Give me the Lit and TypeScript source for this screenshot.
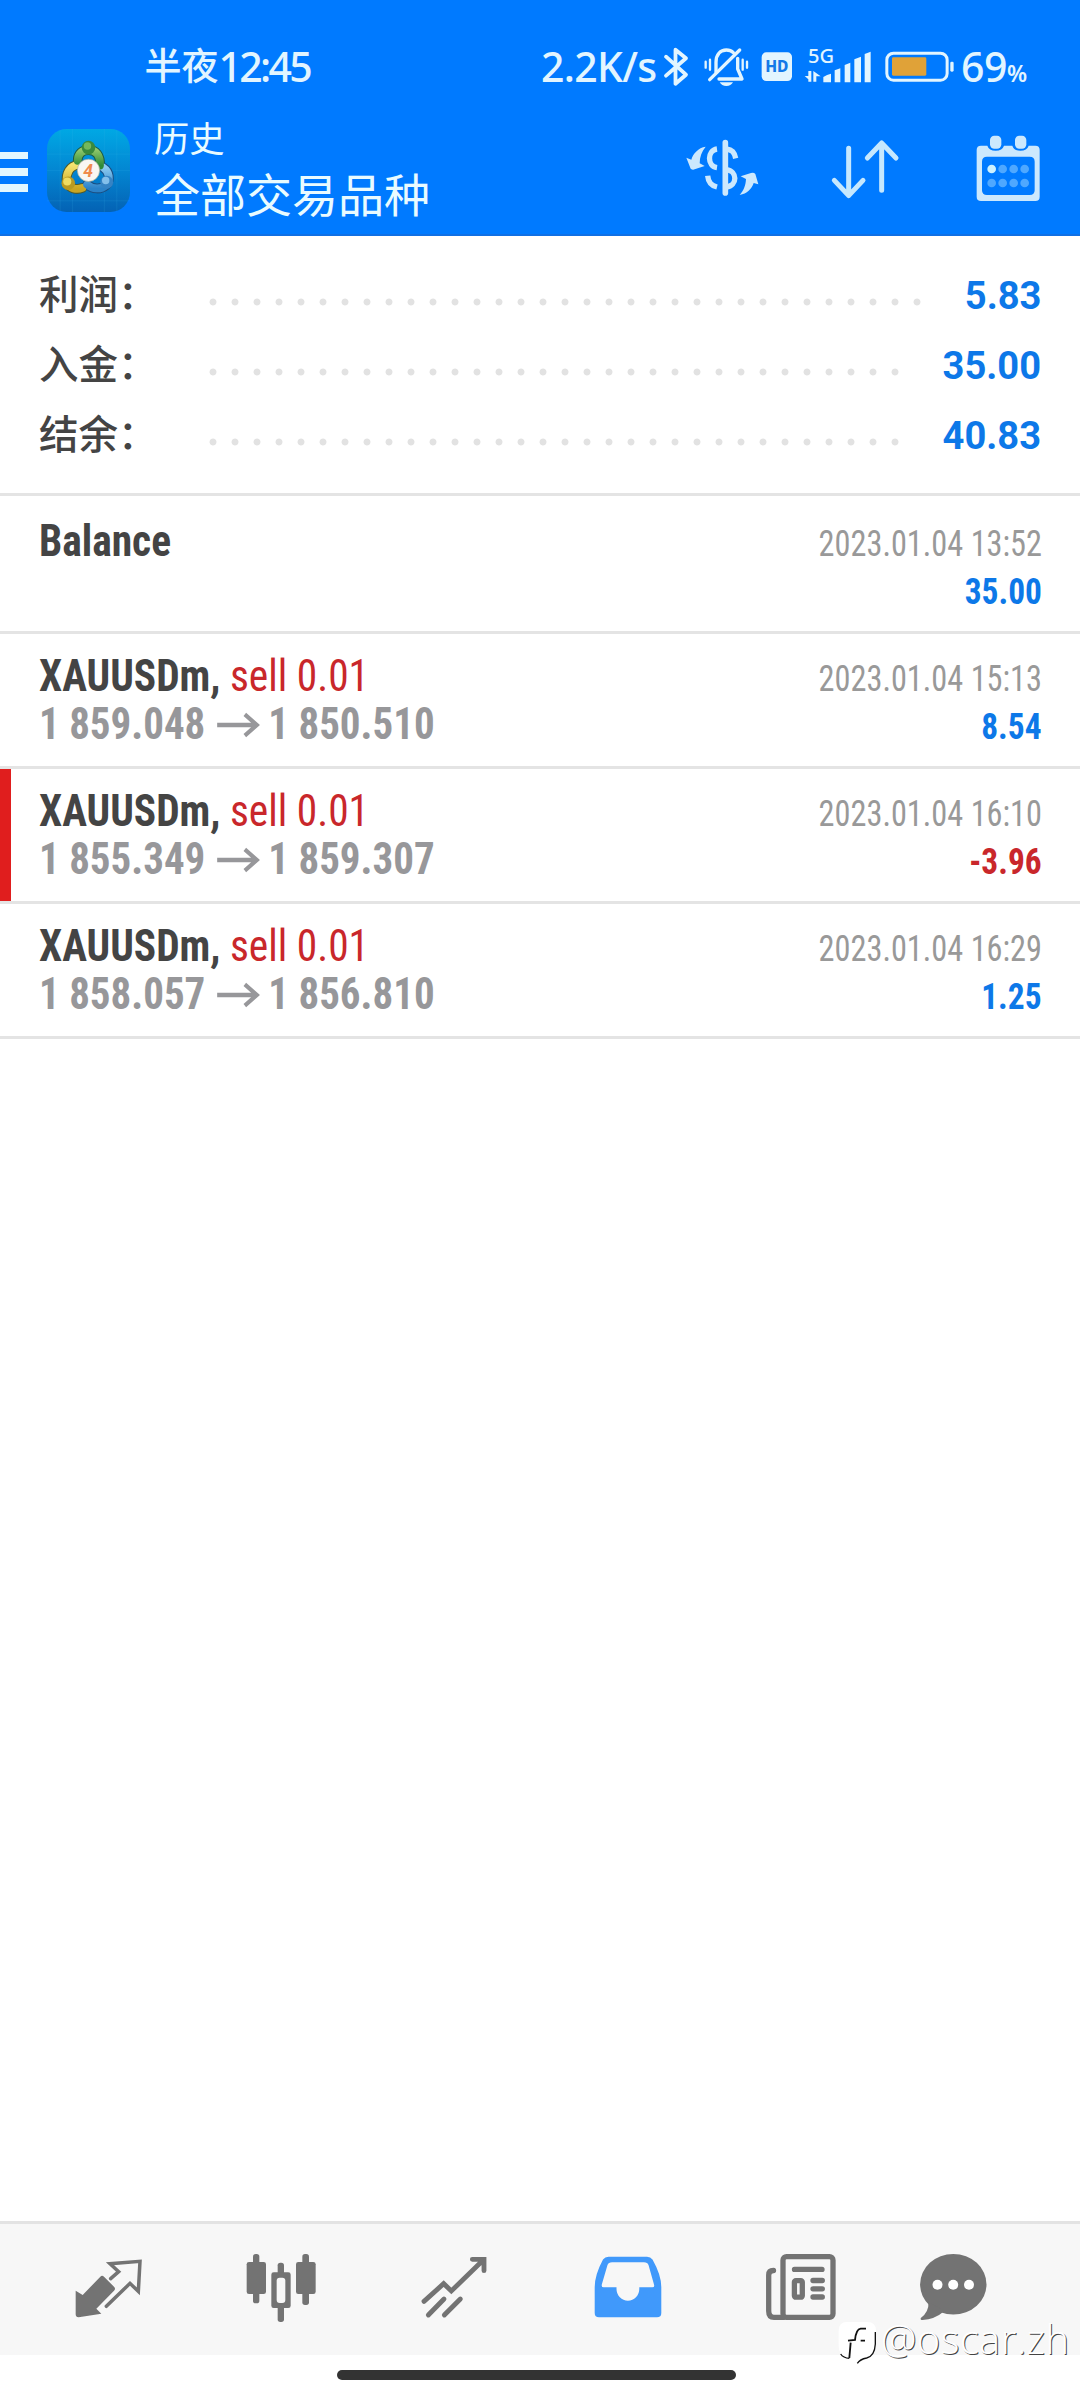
import { LitElement, html, css, svg, nothing } from "lit";
import { customElement, property } from "lit/decorators.js";

interface Total {
  label: string;
  value: string;
  dots: number;
}

interface Deal {
  symbol: string;
  side?: string;
  open?: string;
  close?: string;
  time: string;
  profit: string;
  marked?: boolean;
}

const TOTALS: Total[] = [
  { label: "利润：", value: "5.83", dots: 33 },
  { label: "入金：", value: "35.00", dots: 32 },
  { label: "结余：", value: "40.83", dots: 32 },
];

const DEALS: Deal[] = [
  { symbol: "Balance", time: "2023.01.04 13:52", profit: "35.00" },
  { symbol: "XAUUSDm,", side: "sell 0.01", open: "1 859.048", close: "1 850.510", time: "2023.01.04 15:13", profit: "8.54" },
  { symbol: "XAUUSDm,", side: "sell 0.01", open: "1 855.349", close: "1 859.307", time: "2023.01.04 16:10", profit: "-3.96", marked: true },
  { symbol: "XAUUSDm,", side: "sell 0.01", open: "1 858.057", close: "1 856.810", time: "2023.01.04 16:29", profit: "1.25" },
];

@customElement("status-bar")
class StatusBar extends LitElement {
  static styles = css`
    :host {
      display: flex;
      align-items: center;
      height: 67px;
      padding: 33px 0 0 144.5px;
      color: #e2f5ff;
      font: 550 41px/67px "Noto Sans", "Noto Sans CJK SC", sans-serif;
      white-space: nowrap;
    }
    svg { display: block; flex: none; height: 46.7px; }
    .time { width: 396.5px; letter-spacing: -2.7px; }
    .zh { font: 500 37px/37px "Noto Sans CJK SC", sans-serif; letter-spacing: 0; vertical-align: 2px; }
    .speed { width: 119px; letter-spacing: -0.7px; }
    .bt { width: 32px; }
    .bell { width: 46.7px; margin-left: 10.7px; }
    .hd { width: 35px; margin-left: 10px; }
    .signal { width: 70px; margin-left: 8.4px; }
    .battery { width: 73.3px; margin-left: 10px; }
    .level { margin-left: 5px; letter-spacing: -0.5px; }
    .pct { font-size: 23px; font-weight: 600; line-height: 23px; }
    .lab { font-family: "Noto Sans", sans-serif; }
  `;
  render() {
    return html`
      <div class="time"><span class="zh">半夜</span>12:45</div>
      <div class="speed">2.2K/s</div>
      <svg class="bt" viewBox="660 43.3 32 46.7" fill="none" stroke="#e2f5ff" stroke-width="3.8" stroke-linejoin="round" stroke-linecap="round">
        <path d="M666 57 L686 75 L675.5 84 V50 L686 58.5 L666 76" />
      </svg>
      <svg class="bell" viewBox="80 10 140 140" fill="none" stroke="#e2f5ff" stroke-width="10" stroke-linecap="round">
        <path d="M119 98 V68 C119 43 133 31 150 31 C158 31 166 34 171 39 M184 56 V88 L197 118 H128" stroke-linejoin="round" />
        <path d="M100 120 L190 31" />
        <path d="M130 128 h40 q-6 11 -20 11 t-20 -11z" fill="#e2f5ff" stroke="none" />
        <path d="M88 66 V84 M101 60 V90 M199 60 V90 M212 66 V84" stroke-width="7" />
      </svg>
      <svg class="hd" viewBox="250 10 105 140">
        <rect x="258" y="38" width="91" height="86" rx="14" fill="#e2f5ff" />
        <text class="lab" x="303.500" y="98" text-anchor="middle" font-size="48" font-weight="800" textLength="70" lengthAdjust="spacingAndGlyphs" fill="#1479e8">HD</text>
      </svg>
      <svg class="signal" viewBox="380 10 210 140" fill="#e2f5ff">
        <text class="lab" x="395" y="70" font-size="60" font-weight="500" textLength="78" lengthAdjust="spacingAndGlyphs">5G</text>
        <path d="M396 94 H405 V126 H396 V119 L385 109 H396z M411 94 L433 110 H420 V126 H411z" />
        <path d="M441 128 V112 Q452 104 464 102 V128z M475 92 l17 -6 V128 H475z M505 76 l17 -7 V128 H505z M534 59 l20 -8 V128 H534z M565 43 l18 -7 V128 H565z" />
      </svg>
      <svg class="battery" viewBox="620 10 220 140">
        <rect x="631.500" y="40.500" width="181" height="81" rx="20" fill="none" stroke="#e2f5ff" stroke-width="9" />
        <rect x="647" y="53" width="103" height="55" rx="4" fill="#e0a238" />
        <rect x="822" y="66" width="10" height="30" rx="4" fill="#e2f5ff" />
      </svg>
      <div class="level">69<span class="pct">%</span></div>
    `;
  }
}

@customElement("app-bar")
class AppBar extends LitElement {
  static styles = css`
    :host { display: flex; height: 134px; color: #e9fbff; border-bottom: 2px solid #1170e4; box-sizing: content-box; }
    svg { display: block; }
    .menu { display: grid; gap: 8.8px; align-content: start; width: 27.5px; padding-top: 51.5px; }
    .menu i { height: 7.7px; background: #e2f7ff; }
    .logo { width: 83px; height: 83px; margin: 28.5px 0 0 19.5px; }
    .titles { flex: 1; padding: 13.5px 0 0 24px; font-family: "Noto Sans CJK SC", sans-serif; white-space: nowrap; }
    .small { font-size: 35.3px; line-height: 46px; }
    .big { font-size: 46px; line-height: 65px; }
    .actions { display: flex; gap: 63.3px; padding: 33.3px 30.7px 0 0; }
    .actions svg { width: 80px; height: 70px; }
    .four { font-family: Roboto, sans-serif; font-style: italic; font-weight: 700; }
  `;
  render() {
    return html`
      <div class="menu"><i></i><i></i><i></i></div>
      <svg class="logo" viewBox="23 26 246 245" preserveAspectRatio="none">
        <defs>
          <linearGradient id="sky" x1="0" y1="0" x2="0" y2="1"><stop offset="0" stop-color="#00a8e4" /><stop offset=".5" stop-color="#0386d2" /><stop offset="1" stop-color="#0462b4" /></linearGradient>
          <linearGradient id="g" x1="0" y1="0" x2="0" y2="1"><stop offset="0" stop-color="#8fc76a" /><stop offset="1" stop-color="#2f8a38" /></linearGradient>
          <linearGradient id="y" x1="0" y1="0" x2="0" y2="1"><stop offset="0" stop-color="#f6e470" /><stop offset="1" stop-color="#c9a521" /></linearGradient>
          <linearGradient id="b" x1="0" y1="0" x2="0" y2="1"><stop offset="0" stop-color="#8ccaf0" /><stop offset="1" stop-color="#2b82c8" /></linearGradient>
        </defs>
        <rect x="23" y="26" width="246" height="245" rx="58" fill="url(#sky)" />
        <path d="M62 28 V269 M99 26 V271 M193 26 V271 M230 28 V269 M23 100 H269 M23 148 H269 M23 238 H269" stroke="#43b8ea" stroke-opacity=".22" stroke-width="2" />
        <g fill="none" stroke-linecap="round">
          <path d="M114 120 C114 98 128 88 146 88 C168 88 182 104 180 134" stroke="#1d5a44" stroke-width="29" />
          <path d="M116 132 C90 134 78 158 82 182 C90 204 112 206 128 200" stroke="#4f5a2c" stroke-width="29" />
          <path d="M190 140 C208 152 212 176 198 192 C182 206 158 204 142 190" stroke="#1b4f83" stroke-width="29" />
          <path d="M116 132 C90 134 78 158 82 182 C90 204 112 206 128 200" stroke="url(#y)" stroke-width="23" />
          <path d="M190 140 C208 152 212 176 198 192 C182 206 158 204 142 190" stroke="url(#b)" stroke-width="23" />
          <path d="M114 120 C114 98 128 88 146 88 C168 88 182 104 180 134" stroke="url(#g)" stroke-width="23" />
        </g>
        <circle cx="146" cy="81" r="20" fill="#3a8a3c" /><circle cx="143" cy="76" r="11" fill="#74b85c" />
        <circle cx="86" cy="186" r="20" fill="#b99a22" /><circle cx="83" cy="181" r="12" fill="#efdc62" />
        <circle cx="200" cy="183" r="19" fill="#3583c4" /><circle cx="197" cy="178" r="11" fill="#83bfea" />
        <circle cx="146" cy="148" r="33" fill="#f9f6f2" stroke="#a9ae96" stroke-width="2" />
        <text class="four" x="145" y="167" font-size="52" text-anchor="middle" fill="#ef8a4c">4</text>
      </svg>
      <div class="titles">
        <div class="small">历史</div>
        <div class="big">全部交易品种</div>
      </div>
      <div class="actions">
        <svg viewBox="20 280 240 210" fill="none" stroke="#cce8fd">
          <path d="M147 309 V460" stroke-width="17" stroke-linecap="round" />
          <path d="M122 328 C92 332 92 380 122 384 M94 408 C96 430 106 438 122 442" stroke-width="16" />
          <path d="M150 328 C168 330 174 338 178 356 M150 390 C184 394 184 438 150 442" stroke-width="16" />
          <path d="M88 321 C66 324 50 342 45 360 L30 354 L43 387 Q49 392 55 389 L85 379 L70 371 C70 352 76 336 88 321z" fill="#cce8fd" stroke="none" />
          <path d="M190 466 C212 462 226 448 232 430 L246 434 L237 403 Q232 397 224 400 L193 410 L209 418 C208 438 202 452 190 466z" fill="#cce8fd" stroke="none" />
        </svg>
        <svg viewBox="450 280 240 210" fill="none" stroke="#c6e8fe" stroke-width="15" stroke-linecap="round" stroke-linejoin="round">
          <path d="M518 326 V466 M475 422 L518 468 L561 422 M617 452 V312 M574 355 L617 310 L660 355" />
        </svg>
        <svg viewBox="880 280 240 210" fill="#cce8fd">
          <path fill-rule="evenodd" d="M916 318 H935 Q940 333 960 333 T985 318 H1010 Q1014 333 1034 333 T1059 318 H1079 Q1092 318 1092 331 V471 Q1092 484 1079 484 H916 Q903 484 903 471 V331 Q903 318 916 318z M934 351 Q919 351 919 366 V452 Q919 466 934 466 H1062 Q1077 466 1077 452 V366 Q1077 351 1062 351z" />
          <rect x="943" y="288" width="34" height="39" rx="13" /><rect x="1018" y="288" width="34" height="39" rx="13" />
          ${[388, 430].map((y) => [948, 981, 1014, 1047].map((x) => svg`<circle cx=${x} cy=${y} r="13" fill=${x === 948 && y === 388 ? "#cdf1ff" : "#4fa8ff"} />`))}
        </svg>
      </div>
    `;
  }
}

@customElement("deal-row")
class DealRow extends LitElement {
  @property({ attribute: false }) deal!: Deal;
  static styles = css`
    :host {
      display: block;
      height: 113px;
      padding: 19px 38px 0 38.5px;
      border-bottom: 3px solid #e4e4e4;
      font-family: "Roboto Condensed", Roboto, sans-serif;
      white-space: nowrap;
    }
    :host(.first) { padding-top: 22px; }
    :host(.marked) { box-shadow: inset 11px 0 #e01e1e; }
    .line { display: flex; justify-content: space-between; align-items: baseline; height: 48px; line-height: 48px; }
    .name { font-size: 43.6px; color: #444; transform: scaleX(0.95); transform-origin: left; }
    .sell { color: #c9272b; }
    .prices { display: flex; align-items: baseline; min-height: 48px; font-size: 43.6px; font-weight: 700; color: #97979a; transform: scaleX(0.94); transform-origin: left; }
    .prices svg { width: 46px; height: 28px; margin: 0 9px 0 12px; align-self: center; }
    .time { font-size: 36.3px; color: #999; transform: scaleX(0.89); transform-origin: right; }
    .profit { font-size: 36.3px; font-weight: 700; color: #0d78e8; transform: scaleX(0.92); transform-origin: right; }
    :host(.first) .profit { padding-top: 2px; }
    .loss { color: #c9272b; }
  `;
  render() {
    const d = this.deal;
    return html`
      <div class="line">
        <div class="name"><b>${d.symbol}</b> ${d.side ? html`<span class="sell">${d.side}</span>` : nothing}</div>
        <div class="time">${d.time}</div>
      </div>
      <div class="line">
        ${d.open
          ? html`<div class="prices">
              <span>${d.open}</span>
              <svg viewBox="0 0 43 26" fill="none" stroke="#97979a" stroke-width="4"><path d="M0.500 13 H39 M28 3 L40 13 L28 23" /></svg>
              <span>${d.close}</span>
            </div>`
          : html`<div></div>`}
        <div class="profit ${d.profit.startsWith("-") ? "loss" : ""}">${d.profit}</div>
      </div>
    `;
  }
}

@customElement("bottom-nav")
class BottomNav extends LitElement {
  static styles = css`
    :host {
      display: grid;
      grid-template-columns: repeat(5, 173.3px) 131px;
      justify-items: center;
      height: 131px;
      padding-left: 21px;
      border-top: 3px solid #e3e3e3;
      background: #f7f7f7;
    }
    svg { display: block; width: 80px; height: 90px; margin-top: 16px; }
  `;
  render() {
    const c = "#737373";
    return html`
      <svg viewBox="24 0 240 270" fill="none" stroke=${c}>
        <path d="M47 152 L68 165 L121 110 Q126 105 132 110 L162 140 Q168 146 162 152 L109 206 L124 221 L56 232 Q47 232 47 223z" fill=${c} stroke="none" />
        <path d="M152 116 L176 95 L150 71 L240 64 L235 154 L210 130 L139 199" stroke-width="10.500" stroke-linecap="round" />
      </svg>
      <svg viewBox="543 0 240 270" fill=${c}>
        <rect x="579" y="42" width="19" height="148" rx="8" /><rect x="560" y="66" width="58" height="96" rx="7" />
        <rect x="727" y="42" width="20" height="153" rx="8" /><rect x="708" y="66" width="59" height="96" rx="7" />
        <rect x="653" y="68" width="19" height="178" rx="8" /><rect x="634" y="97" width="58" height="107" rx="7" />
        <rect x="650" y="113" width="26" height="76" rx="9" fill="#f7f7f7" />
      </svg>
      <svg viewBox="1063 0 240 270" fill="none" stroke=${c} stroke-width="14.500" stroke-linecap="round">
        <path d="M1093 184 L1152 131 L1175 153 L1270 61 M1238 58 H1273 V92" />
        <path d="M1106 225 L1153 177 M1154 225 L1202 177" />
      </svg>
      <svg viewBox="587.500 2240 80 90">
        <path fill="#4099fb" fill-rule="evenodd" d="M608 2256.700 H646.500 Q650 2256.700 652 2259.500 Q660.800 2275 660.800 2287 V2313 Q660.800 2317.300 656.500 2317.300 H598.500 Q594.200 2317.300 594.200 2313 V2287 Q594.200 2275 602.500 2259.500 Q604.500 2256.700 608 2256.700z M611.500 2262.300 Q608 2262.300 607 2265 L601.300 2284.500 Q600.800 2287.300 603 2287.300 H616 V2289 A11.400 11.700 0 0 0 638.800 2289 V2287.300 H652 Q654.300 2287.300 653.500 2284.500 L648 2265 Q647 2262.300 643.500 2262.300z" />
      </svg>
      <svg viewBox="761 2240 80 90" fill="none" stroke=${c} stroke-width="5.300" stroke-linecap="round">
        <rect x="783" y="2256.700" width="50" height="60.600" rx="3.500" />
        <path d="M773.500 2270.500 Q768.700 2270.500 768.700 2275 V2311 Q768.700 2317.300 774 2317.300 H784" />
        <path d="M794.500 2269.400 H822 M813 2280.500 H822.300 M813 2288.800 H822.300 M813 2297 H822.300" />
        <rect x="794.400" y="2280.600" width="7.900" height="16.600" rx="1.500" />
      </svg>
      <svg viewBox="912.500 2240 80 90">
        <ellipse cx="952.800" cy="2284.300" rx="33.200" ry="30.300" fill=${c} />
        <path d="M928 2302 Q928.500 2312 920.300 2318 Q919.500 2320 922 2320 Q934 2319.500 944 2311z" fill=${c} />
        <g fill="#fff"><circle cx="937" cy="2284.700" r="5" /><circle cx="952.700" cy="2284.700" r="5" /><circle cx="968.500" cy="2284.700" r="5" /></g>
      </svg>
    `;
  }
}

@customElement("app-root")
class AppRoot extends LitElement {
  static styles = css`
    :host { display: flex; flex-direction: column; position: relative; width: 1080px; height: 2400px; background: #fff; overflow: hidden; }
    .top { background: #007aff; height: 236px; }
    .totals { box-sizing: border-box; height: 260px; padding: 21px 39px 0 39px; border-bottom: 3px solid #e4e4e4; }
    .total { display: flex; align-items: baseline; height: 70px; line-height: 70px; }
    .label { width: 163px; font-family: "Noto Sans CJK SC", sans-serif; font-weight: 500; font-size: 39.500px; color: #444; white-space: nowrap; }
    .dots { align-self: stretch; background: radial-gradient(circle, #e2e2e2 3px, transparent 3.900px) 0 10px / 22px 70px repeat-x; }
    .value { margin-left: auto; font-family: Roboto, sans-serif; font-weight: 700; font-size: 39.500px; color: #0d78e8; transform: scaleX(0.965); transform-origin: right; }
    .deals { flex: 1; }
    .home { display: flex; justify-content: center; height: 45px; padding-right: 7px; background: #fff; }
    .home i { width: 399px; height: 10px; margin-top: 15px; border-radius: 5px; background: #333; }
    .mark { position: absolute; left: 834px; top: 2314px; display: flex; align-items: flex-start; color: #fff; }
    .mark svg { width: 46px; height: 52px; margin-top: 3px; }
    .mark span { margin-left: 1px; font: 300 40px/50px "Open Sans", "Noto Sans", sans-serif; text-shadow: 1px 1px 0 #444; letter-spacing: 0.4px; }
  `;
  render() {
    return html`
      <div class="top"><status-bar></status-bar><app-bar></app-bar></div>
      <div class="totals">
        ${TOTALS.map((t) => html`<div class="total"><div class="label">${t.label}</div><div class="dots" style="width:${t.dots * 22}px"></div><div class="value">${t.value}</div></div>`)}
      </div>
      <div class="deals">
        ${DEALS.map((d, i) => html`<deal-row class="${i === 0 ? "first" : ""} ${d.marked ? "marked" : ""}" .deal=${d}></deal-row>`)}
      </div>
      <bottom-nav></bottom-nav>
      <div class="home"><i></i></div>
      <div class="mark">
        <svg viewBox="12 21 138 156">
          <path d="M50 36 H112 Q138 36 138 62 V104 Q136 142 108 148 Q92 152 84 162 L82 150 Q58 146 50 140 Q26 136 26 108 V62 Q26 36 50 36z" fill="#fff" />
          <path d="M108 56 H92 Q78 58 75 90 L54 92 M62 98 L58 144 M92 92 H105" fill="none" stroke="#111" stroke-width="5.500" />
          <path d="M136 66 V102 Q134 138 110 144 Q90 148 82 160 M32 132 Q40 144 58 145" fill="none" stroke="#111" stroke-width="4" />
        </svg>
        <span>@oscar.zh</span>
      </div>
    `;
  }
}
